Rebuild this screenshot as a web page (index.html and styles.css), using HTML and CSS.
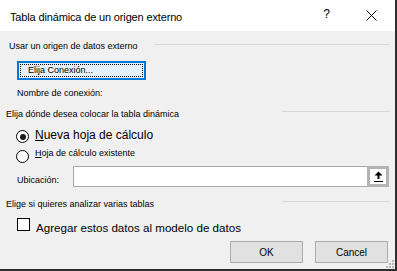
FILE: index.html
```html
<!DOCTYPE html>
<html lang="es">
<head>
    <meta charset="UTF-8">
    <title>Tabla dinámica de un origen externo</title>
    <link rel="stylesheet" href="styles.css">
</head>
<body>
    <div class="dialog">
        <!-- Title bar -->
        <div class="titlebar">
            <span class="title">Tabla dinámica de un origen externo</span>
            <span class="help">?</span>
            <svg class="close" width="11" height="11" viewBox="0 0 11 11">
                <path d="M0.5 0.5 L10.5 10.5 M10.5 0.5 L0.5 10.5" stroke="#000" stroke-width="1"/>
            </svg>
        </div>

        <div class="content">
            <div class="group-head first">
                <span>Usar un origen de datos externo</span>
                <span class="rule rule-long"></span>
            </div>

            <button class="btn-connect"><span>Elija Conexión...</span></button>

            <div class="conn-name">Nombre de conexión:</div>

            <div class="group-head second">
                <span>Elija dónde desea colocar la tabla dinámica</span>
                <span class="rule rule-short"></span>
            </div>

            <div class="radio-row big">
                <span class="radio checked"></span>
                <span class="label"><u>N</u>ueva hoja de cálculo</span>
            </div>

            <div class="radio-row small">
                <span class="radio"></span>
                <span class="label"><u>H</u>oja de cálculo existente</span>
            </div>

            <div class="location-row">
                <span class="label">Ubicación:</span>
                <span class="location-input"></span>
                <span class="picker">
                    <svg width="9" height="11" viewBox="0 0 9 11">
                        <path d="M4.5 0.5 L8.5 4.5 L5.5 4.5 L5.5 8 L3.5 8 L3.5 4.5 L0.5 4.5 Z" fill="#000"/>
                        <rect x="0" y="10" width="9" height="1" fill="#000"/>
                    </svg>
                </span>
            </div>

            <div class="group-head third">
                <span>Elige si quieres analizar varias tablas</span>
                <span class="rule rule-short"></span>
            </div>

            <div class="check-row">
                <span class="checkbox"></span>
                <span class="label">Agregar estos datos al modelo de datos</span>
            </div>

            <div class="footer">
                <button class="btn">OK</button>
                <button class="btn">Cancel</button>
            </div>
        </div>

        <!-- resize grip -->
        <svg class="grip" width="9" height="9" viewBox="0 0 9 9">
            <rect x="7" y="1" width="2" height="2" fill="#b5b5b5"/>
            <rect x="4" y="4" width="2" height="2" fill="#b5b5b5"/>
            <rect x="7" y="4" width="2" height="2" fill="#b5b5b5"/>
            <rect x="1" y="7" width="2" height="2" fill="#b5b5b5"/>
            <rect x="4" y="7" width="2" height="2" fill="#b5b5b5"/>
            <rect x="7" y="7" width="2" height="2" fill="#b5b5b5"/>
        </svg>
    </div>
</body>
</html>
```

FILE: styles.css
```css
/* Page and window frame */
body {
    margin: 0;
    font-family: "Liberation Sans", Arial, sans-serif;
    color: #000;
}

.dialog {
    position: relative;
    width: 397px;
    height: 271px;
    box-sizing: border-box;
    background-color: #f0f0f0;
    border-right: 2px solid #2e2e2e;
    border-bottom: 2px solid #2e2e2e;
}

/* Title bar */
.titlebar {
    display: flex;
    align-items: flex-start;
    height: 31px;
    box-sizing: border-box;
    padding-top: 2px;
    background-color: #fff;
}

.title {
    margin-left: 10px;
    font-size: 11px;
    letter-spacing: -0.15px;
    line-height: 31px;
    height: 29px;
}

.help {
    margin-left: auto;
    font-size: 12px;
    line-height: 25px;
}

.close {
    margin: 8px 18px 0 36px;
}

/* Main area */
.content {
    display: flex;
    flex-direction: column;
    padding: 0 6px;
    font-size: 9px;
}

.group-head {
    display: flex;
    align-items: flex-start;
    height: 12px;
    line-height: 12px;
}

.group-head.first {
    margin-top: 9px;
    padding-left: 3px;
}

.group-head.second {
    margin-top: 9px;
}

.group-head.third {
    margin-top: 11px;
}

.rule {
    margin-left: auto;
    height: 1px;
    background-color: #d7d7d7;
}

.first .rule {
    margin-top: 4px;
}

.second .rule,
.third .rule {
    margin-top: 3px;
}

.rule-long {
    width: 234px;
}

.rule-short {
    width: 107px;
}

/* Connection button */
.btn-connect {
    margin: 9px 0 0 11px;
    width: 129px;
    height: 19px;
    padding: 0 0 0 9px;
    box-sizing: border-box;
    border: 2px solid #0078d7;
    background-color: #e5f1fb;
    font-family: inherit;
    font-size: 9px;
    line-height: 15px;
    text-align: left;
    outline: 1px dotted #000;
    outline-offset: -4px;
}

.conn-name {
    margin: 7px 0 0 11px;
    height: 12px;
    line-height: 12px;
}

/* Radio options */
.radio-row {
    display: flex;
    align-items: flex-start;
    margin-left: 10px;
    height: 14px;
}

.radio-row .label {
    line-height: 12px;
}

.radio-row.big {
    margin-top: 9px;
    font-size: 12px;
}

.radio-row.small {
    margin-top: 6px;
}

.radio-row.small .label {
    margin-top: -2px;
}

.radio {
    width: 13px;
    height: 13px;
    box-sizing: border-box;
    margin-top: 1px;
    margin-right: 6px;
    border: 1px solid #000;
    border-radius: 50%;
    background-color: #fff;
    position: relative;
}

.radio.checked::after {
    content: "";
    position: absolute;
    left: 2.5px;
    top: 2.5px;
    width: 6px;
    height: 6px;
    border-radius: 50%;
    background-color: #1a1a1a;
}

/* Location field */
.location-row {
    display: flex;
    align-items: flex-start;
    margin: 3px 0 0 11px;
    height: 21px;
}

.location-row .label {
    width: 56px;
    padding-top: 6px;
    line-height: 16px;
}

.location-input {
    flex: 1;
    height: 21px;
    box-sizing: border-box;
    border: 1px solid #a8a8a8;
    border-right: none;
    background-color: #fff;
}

.picker {
    display: flex;
    align-items: center;
    justify-content: center;
    width: 22px;
    height: 21px;
    box-sizing: border-box;
    border: 3px solid #b4b4b4;
    background-color: #fff;
}

/* Checkbox */
.check-row {
    display: flex;
    align-items: flex-start;
    margin: 7px 0 0 11px;
    height: 18px;
}

.checkbox {
    width: 13px;
    height: 13px;
    box-sizing: border-box;
    margin-top: 1px;
    margin-right: 6px;
    border: 1px solid #000;
    background-color: #fff;
}

.check-row .label {
    font-size: 11.6px;
    line-height: 14px;
    padding-top: 4px;
}

/* Bottom buttons */
.footer {
    display: flex;
    justify-content: flex-end;
    gap: 12px;
    margin-top: 6px;
    padding-right: 1px;
}

.btn {
    width: 73px;
    height: 22px;
    border: 1px solid #adadad;
    background-color: #e1e1e1;
    font-family: inherit;
    font-size: 10px;
    padding: 0;
}

.grip {
    position: absolute;
    right: 1px;
    bottom: 1px;
}
```
